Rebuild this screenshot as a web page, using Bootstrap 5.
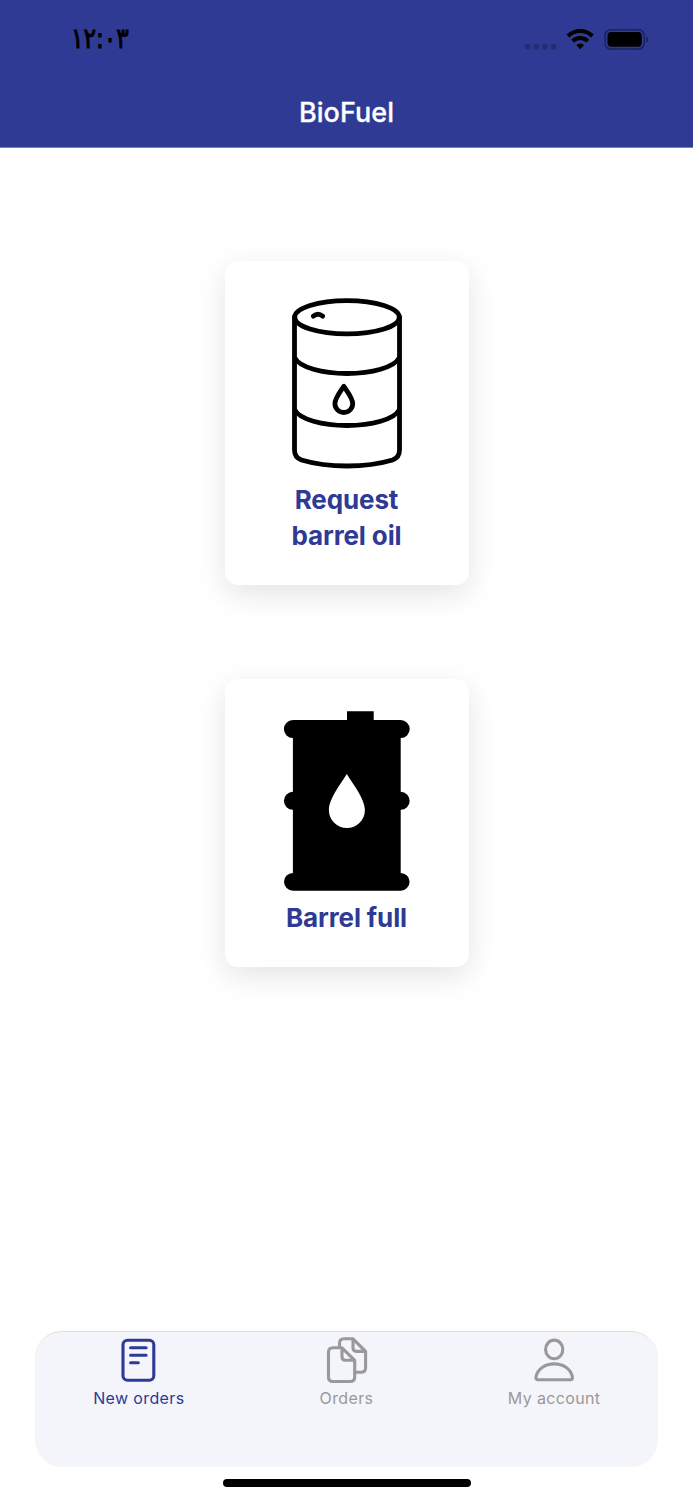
<!DOCTYPE html>
<html lang="en">
<head>
<meta charset="utf-8">
<meta name="viewport" content="width=device-width, initial-scale=1">
<title>BioFuel</title>
<link href="https://cdn.jsdelivr.net/npm/bootstrap@5.3.0/dist/css/bootstrap.min.css" rel="stylesheet">
<style>
  :root { --brand: #2e3a94; --muted: #999; }
  body { font-family: Inter, "Liberation Sans", sans-serif; background: #fff; }
  .screen { height: 1500px; overflow: hidden; }
  .app-header { height: 148px; background: var(--brand); border-bottom: 1px solid #7b82ba; }
  .status-bar { height: 77px; padding-left: 71px; padding-right: 43px; }
  .clock { font: 500 28px/77px "DejaVu Sans", sans-serif; color: #000; -webkit-text-stroke: 1px #000; transform: scaleX(.83); transform-origin: left; }
  .app-title { font-size: 27px; font-weight: 500; line-height: 71px; letter-spacing: .05px; -webkit-text-stroke: .3px #fff; }
  .options { padding-top: 113px; gap: 94px; }
  .option-card { width: 244px; border: 0; border-radius: 13px; box-shadow: 0 9px 30px rgba(0,0,0,.11); color: var(--brand); }
  .option-label { font-size: 26px; font-weight: 700; line-height: 36px; letter-spacing: -.12px; padding-top: 1px; }
  .tab-bar { height: 136px; margin: 0 35px; background: #f4f5fa; border-radius: 27px; border-top: 1px solid #dddee2; }
  .tab { color: var(--muted); padding-top: 2px; font-size: 16px; line-height: 24px; letter-spacing: .36px; }
  .tab.current { color: var(--brand); }
  .home-bar { width: 248px; height: 8px; margin: 12px auto 13px; background: #000; }
</style>
</head>
<body>
<div class="screen d-flex flex-column">
  <header class="app-header flex-shrink-0">
    <div class="status-bar d-flex justify-content-between align-items-center">
      <span class="clock">١٢:٠٣</span>
      <svg width="126" height="30" viewBox="524 24 126 30">
        <g fill="#242d72"><rect x="525" y="44" width="5.4" height="5.4" rx="1.8"/><rect x="533.6" y="44" width="5.4" height="5.4" rx="1.8"/><rect x="542.2" y="44" width="5.4" height="5.4" rx="1.8"/><rect x="550.8" y="44" width="5.4" height="5.4" rx="1.8"/></g>
        <g fill="none" stroke="#000" stroke-width="4"><path d="M568 36a17.3 17.3 0 0 1 24.4 0"/><path d="M572.6 41.200a10.800 10.800 0 0 1 15.200 0"/></g>
        <path d="M576.3 45a5.8 5.8 0 0 1 7.8 0L580.2 49.300z"/>
        <rect x="605" y="29.7" width="39.3" height="19.4" rx="5.8" fill="none" stroke="#1c235a" stroke-width="1.5"/>
        <rect x="607.5" y="32" width="34.3" height="14.7" rx="3.6"/>
        <path d="M646.2 36.2q2.2 1 2.2 3.2t-2.2 3.2z" fill="#1c235a"/>
      </svg>
    </div>
    <h1 class="app-title text-white text-center m-0">BioFuel</h1>
  </header>

  <main class="options flex-grow-1 d-flex flex-column align-items-center">
    <a class="card option-card text-center text-decoration-none" style="height:324px">
      <svg width="244" height="220" viewBox="225 261 244 220" fill="none" stroke="#000" stroke-width="4.8" stroke-linecap="round" stroke-linejoin="round">
        <ellipse cx="347" cy="317.2" rx="52.3" ry="16.6"/>
        <path d="M294.5 317v133q0 7.500 7 10 20 6 45.500 6t45.500-6q7-2.500 7-10V317"/>
        <path stroke-linecap="butt" d="M294.500 357.500c5 10 28 16 52.500 16s47.500-6 52.500-16M294.500 409.500c5 10 28 16 52.500 16s47.500-6 52.500-16"/>
        <path d="M313.300 316.200q4.700-3.800 9.400 0"/>
        <path d="M343.800 386.200c-3.200 5-8.900 12-8.900 17.400a8.900 8.900 0 0 0 17.800 0c0-5.400-5.700-12.400-8.900-17.400z"/>
      </svg>
      <span class="option-label">Request<br>barrel oil</span>
    </a>
    <a class="card option-card text-center text-decoration-none" style="height:288px">
      <svg width="244" height="220" viewBox="225 679 244 220">
        <path d="M347 711.200h26.700v8.900h27a9 9 0 0 1 0 18v53.700a9 9 0 0 1 0 18v63.100a8.900 8.900 0 0 1 0 17.800h-107.800a8.900 8.900 0 0 1 0-17.800v-63.100a9 9 0 0 1 0-18v-53.700a9 9 0 0 1 0-18h54.100z"/>
        <path fill="#fff" d="M346.800 774c-4.500 8-17.900 24-17.900 36a18 18 0 0 0 36 0c0-12-13.600-28-18.100-36z"/>
      </svg>
      <span class="option-label">Barrel full</span>
    </a>
  </main>

  <nav class="tab-bar row g-0 flex-shrink-0 text-center">
    <a class="tab current col-4 d-flex flex-column align-items-center text-decoration-none">
      <svg width="52" height="52" viewBox="113 1334 52 52" fill="none" stroke="currentColor" stroke-width="3.100" stroke-linecap="round">
        <rect x="123" y="1340.200" width="30.800" height="40" rx="4.500"/>
        <path d="M130.600 1347.700h15.500M130.600 1355.200h15.500M130.600 1362.800h7.700"/>
      </svg>
      <span>New orders</span>
    </a>
    <a class="tab col-4 d-flex flex-column align-items-center text-decoration-none">
      <svg width="52" height="52" viewBox="320 1334 52 52" fill="none" stroke="currentColor" stroke-width="3.100" stroke-linejoin="round">
        <path d="M342 1347.800h-9q-4.500 0-4.500 4.500v24.700q0 4.500 4.500 4.500h17.200q4.500 0 4.500-4.500v-16.700zM342 1347.800v9q0 3.500 3.500 3.500h9.200"/>
        <path d="M339.500 1347v-3.500q0-4.700 4.500-4.700h9l12.600 12.600v16.300q0 4.500-4.500 4.500h-6.200M353 1338.800v9q0 3.600 3.500 3.600h9.100"/>
      </svg>
      <span>Orders</span>
    </a>
    <a class="tab col-4 d-flex flex-column align-items-center text-decoration-none">
      <svg width="52" height="52" viewBox="528 1334 52 52" fill="none" stroke="currentColor" stroke-width="3.100" stroke-linejoin="round">
        <ellipse cx="554.200" cy="1349.400" rx="8.600" ry="9.300"/>
        <path d="M538 1379.700h32.400q2.500 0 2-2.600c-1.600-8.600-9.600-13.200-18.200-13.200s-16.600 4.600-18.200 13.200q-.5 2.600 2 2.600z"/>
      </svg>
      <span>My account</span>
    </a>
  </nav>
  <div class="home-bar rounded-pill flex-shrink-0"></div>
</div>
<script src="https://cdn.jsdelivr.net/npm/bootstrap@5.3.0/dist/js/bootstrap.bundle.min.js"></script>
</body>
</html>
